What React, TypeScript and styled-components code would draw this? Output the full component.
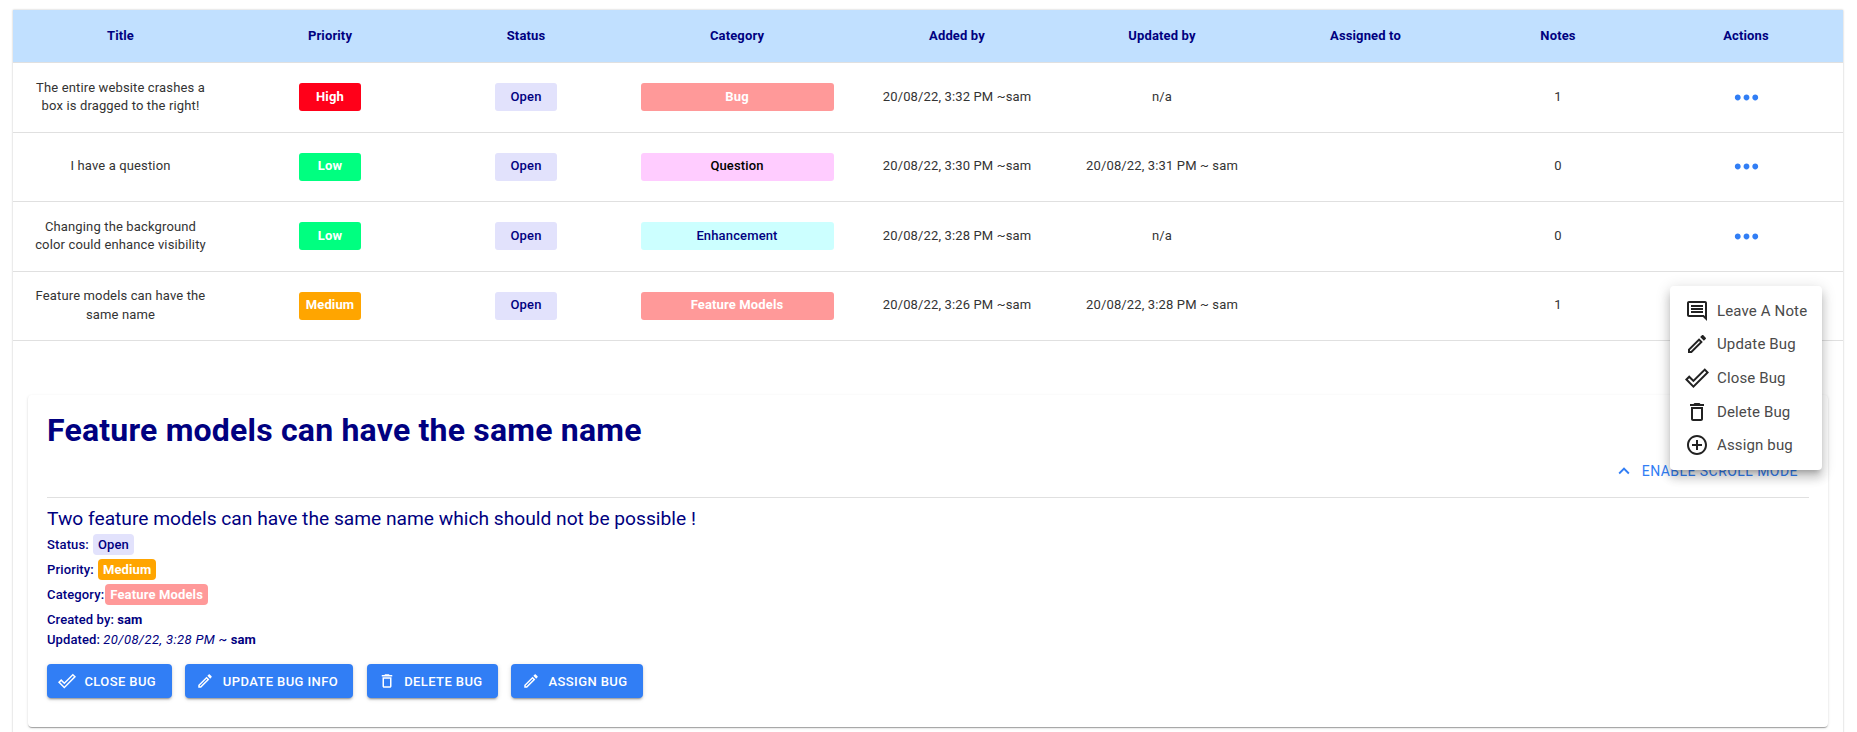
import React from "react";
import styled, { createGlobalStyle } from "styled-components";
import {
  MdAddCircleOutline,
  MdDoneOutline,
  MdExpandLess,
  MdMoreHoriz,
  MdOutlineComment,
  MdOutlineDelete,
  MdOutlineEdit,
} from "react-icons/md";

const GlobalStyle = createGlobalStyle`
  html, body { margin: 0; padding: 0; background: #fff; height: 732px; overflow: hidden; }
  body { font-family: Roboto, "Liberation Sans", sans-serif; color: #333; }
  * { box-sizing: border-box; }
`;

const Page = styled.div`
  position: relative;
  height: 732px;
  padding: 10px 14px 0 13px;
  overflow: hidden;
`;

const Paper = styled.div`
  min-height: 800px;
  background: #fff;
  box-shadow: 0 0 2px rgba(0, 0, 0, 0.25);
`;

const columns = "215px 204px 188px 234px 206px 204px 203px 182px 194px";

const HeadRow = styled.div`
  display: grid;
  grid-template-columns: ${columns};
  height: 53px;
  background: #c1e0ff;
  border-bottom: 1px solid #e0e0e0;
`;

const HeadCell = styled.div`
  display: flex;
  align-items: center;
  justify-content: center;
  font-size: 13px;
  font-weight: 700;
  letter-spacing: 0.14px;
  color: #000080;
  padding-bottom: 1px;
`;

const Row = styled.div`
  display: grid;
  grid-template-columns: ${columns};
  height: 69.5px;
  border-bottom: 1px solid #e0e0e0;
`;

const Cell = styled.div`
  display: flex;
  align-items: center;
  justify-content: center;
  padding: 0 20px;
  font-size: 13px;
  line-height: 18.6px;
  letter-spacing: 0.14px;
  text-align: center;
  color: #333;
`;

const Badge = styled.div<{ $bg: string; $fg: string; $wide?: boolean; $weight?: number }>`
  display: flex;
  align-items: center;
  justify-content: center;
  flex: none;
  width: ${(p) => (p.$wide ? "193px" : "62px")};
  height: 28px;
  border-radius: 3px;
  background: ${(p) => p.$bg};
  color: ${(p) => p.$fg};
  font-size: 13px;
  font-weight: ${(p) => p.$weight ?? 700};
`;

const DotsButton = styled.div`
  display: flex;
  color: #317ef5;
`;

const Card = styled.section`
  margin: 54px 15px 0;
  height: 332px;
  padding: 14px 19px 0;
  background: #fff;
  border-radius: 4px;
  box-shadow: 0 2px 1px -1px rgba(0, 0, 0, 0.2), 0 1px 1px 0 rgba(0, 0, 0, 0.14), 0 1px 3px 0 rgba(0, 0, 0, 0.12);
`;

const CardTitle = styled.h1`
  margin: 0;
  font-size: 32px;
  line-height: 42px;
  font-weight: 700;
  letter-spacing: 0.2px;
  color: #000080;
`;

const ScrollToggle = styled.div`
  display: flex;
  justify-content: flex-end;
  align-items: center;
  gap: 7px;
  height: 24px;
  margin-top: 8px;
  padding-right: 11px;
  color: #317ef5;
  font-size: 14px;
  font-weight: 400;
  letter-spacing: 0.45px;
  text-transform: uppercase;
`;

const Divider = styled.hr`
  margin: 14px 0 0;
  border: 0;
  border-top: 1px solid #e0e0e0;
`;

const Description = styled.h2`
  margin: 9px 0 1px;
  font-size: 19.2px;
  line-height: 24px;
  font-weight: 400;
  color: #000080;
`;

const Meta = styled.div<{ $gap?: number }>`
  display: flex;
  align-items: center;
  gap: ${(p) => p.$gap ?? 4}px;
  height: 25px;
  font-size: 13px;
  font-weight: 500;
  letter-spacing: 0.14px;
  color: #000080;
`;

const MetaLine = styled.div<{ $top?: number }>`
  height: 20px;
  margin-top: ${(p) => p.$top ?? 0}px;
  line-height: 20px;
  font-size: 13px;
  font-weight: 500;
  letter-spacing: 0.1px;
  color: #000080;
  em { font-weight: 400; letter-spacing: 0.4px; }
  strong { font-weight: 700; }
`;

const Chip = styled.span<{ $bg: string; $fg: string; $bold?: boolean }>`
  display: inline-flex;
  align-items: center;
  height: 21px;
  padding: 0 5px;
  border-radius: 4px;
  background: ${(p) => p.$bg};
  color: ${(p) => p.$fg};
  font-size: 13px;
  letter-spacing: 0.14px;
  font-weight: ${(p) => (p.$bold ? 700 : 500)};
`;

const Actions = styled.div`
  display: flex;
  gap: 13.4px;
  margin-top: 14px;
`;

const ActionButton = styled.button<{ $w: number }>`
  display: flex;
  align-items: center;
  gap: 8.4px;
  width: ${(p) => p.$w}px;
  height: 34px;
  padding: 0 0 0 11px;
  border: 0;
  border-radius: 4px;
  background: #317ef5;
  color: #fff;
  font-family: inherit;
  font-size: 13px;
  font-weight: 500;
  letter-spacing: 0.4px;
  text-transform: uppercase;
  white-space: nowrap;
  box-shadow: 0 3px 1px -2px rgba(0, 0, 0, 0.2), 0 2px 2px 0 rgba(0, 0, 0, 0.14), 0 1px 5px 0 rgba(0, 0, 0, 0.12);
`;

const Menu = styled.ul`
  position: absolute;
  left: 1670px;
  top: 286px;
  width: 152px;
  height: 184px;
  margin: 0;
  padding: 8px 0;
  list-style: none;
  background: #fff;
  border-radius: 4px;
  box-shadow: 0 5px 5px -3px rgba(0, 0, 0, 0.2), 0 8px 10px 1px rgba(0, 0, 0, 0.14), 0 3px 14px 2px rgba(0, 0, 0, 0.12);
`;

const MenuItem = styled.li`
  display: flex;
  align-items: center;
  gap: 8px;
  height: 33.6px;
  padding-left: 15px;
  font-size: 15px;
  letter-spacing: 0.14px;
  color: #4a4a4a;
  white-space: nowrap;
  svg { color: #222; flex: none; }
`;

const heads = ["Title", "Priority", "Status", "Category", "Added by", "Updated by", "Assigned to", "Notes", "Actions"];

const rows = [
  { title: "The entire website crashes a box is dragged to the right!", pr: "High", prBg: "#ff0019", cat: "Bug", catBg: "#ff9999", catFg: "#fff", added: "20/08/22, 3:32 PM ~sam", upd: "n/a", notes: 1, dots: true },
  { title: "I have a question", pr: "Low", prBg: "#00ff80", cat: "Question", catBg: "#ffccff", catFg: "#000", added: "20/08/22, 3:30 PM ~sam", upd: "20/08/22, 3:31 PM ~ sam", notes: 0, dots: true },
  { title: "Changing the background color could enhance visibility", pr: "Low", prBg: "#00ff80", cat: "Enhancement", catBg: "#ccffff", catFg: "#000080", added: "20/08/22, 3:28 PM ~sam", upd: "n/a", notes: 0, dots: true },
  { title: "Feature models can have the same name", pr: "Medium", prBg: "#ffa500", cat: "Feature Models", catBg: "#ff9999", catFg: "#fff", added: "20/08/22, 3:26 PM ~sam", upd: "20/08/22, 3:28 PM ~ sam", notes: 1, dots: false },
];

export default function App() {
  return (
    <Page>
      <GlobalStyle />
      <Paper>
        <HeadRow>
          {heads.map((h) => (
            <HeadCell key={h}>{h}</HeadCell>
          ))}
        </HeadRow>
        {rows.map((r) => (
          <Row key={r.title}>
            <Cell>{r.title}</Cell>
            <Cell>
              <Badge $bg={r.prBg} $fg="#fff">{r.pr}</Badge>
            </Cell>
            <Cell>
              <Badge $weight={500} $bg="#e2e2fc" $fg="#000080">Open</Badge>
            </Cell>
            <Cell>
              <Badge $wide $weight={r.cat === "Question" || r.cat === "Enhancement" ? 500 : 700} $bg={r.catBg} $fg={r.catFg}>{r.cat}</Badge>
            </Cell>
            <Cell>{r.added}</Cell>
            <Cell>{r.upd}</Cell>
            <Cell />
            <Cell>{r.notes}</Cell>
            <Cell>
              {r.dots && (
                <DotsButton>
                  <MdMoreHoriz size={35} />
                </DotsButton>
              )}
            </Cell>
          </Row>
        ))}
        <Card>
          <CardTitle>Feature models can have the same name</CardTitle>
          <ScrollToggle>
            <MdExpandLess size={22} />
            Enable scroll mode
          </ScrollToggle>
          <Divider />
          <Description>Two feature models can have the same name which should not be possible !</Description>
          <Meta>
            Status: <Chip $bg="#e2e2fc" $fg="#000080">Open</Chip>
          </Meta>
          <Meta>
            Priority: <Chip $bold $bg="#ffa500" $fg="#fff">Medium</Chip>
          </Meta>
          <Meta $gap={1}>
            Category: <Chip $bold $bg="#ff9999" $fg="#fff">Feature Models</Chip>
          </Meta>
          <MetaLine $top={3}>
            Created by: <strong>sam</strong>
          </MetaLine>
          <MetaLine>
            Updated: <em>20/08/22, 3:28 PM</em> ~ <strong>sam</strong>
          </MetaLine>
          <Actions>
            <ActionButton $w={125}><MdDoneOutline size={18} />Close Bug</ActionButton>
            <ActionButton $w={168}><MdOutlineEdit size={18} />Update Bug Info</ActionButton>
            <ActionButton $w={131}><MdOutlineDelete size={18} />Delete Bug</ActionButton>
            <ActionButton $w={132}><MdOutlineEdit size={18} />Assign Bug</ActionButton>
          </Actions>
        </Card>
      </Paper>
      <Menu>
        <MenuItem><MdOutlineComment size={24} />Leave A Note</MenuItem>
        <MenuItem><MdOutlineEdit size={24} />Update Bug</MenuItem>
        <MenuItem><MdDoneOutline size={24} />Close Bug</MenuItem>
        <MenuItem><MdOutlineDelete size={24} />Delete Bug</MenuItem>
        <MenuItem><MdAddCircleOutline size={24} />Assign bug</MenuItem>
      </Menu>
    </Page>
  );
}
